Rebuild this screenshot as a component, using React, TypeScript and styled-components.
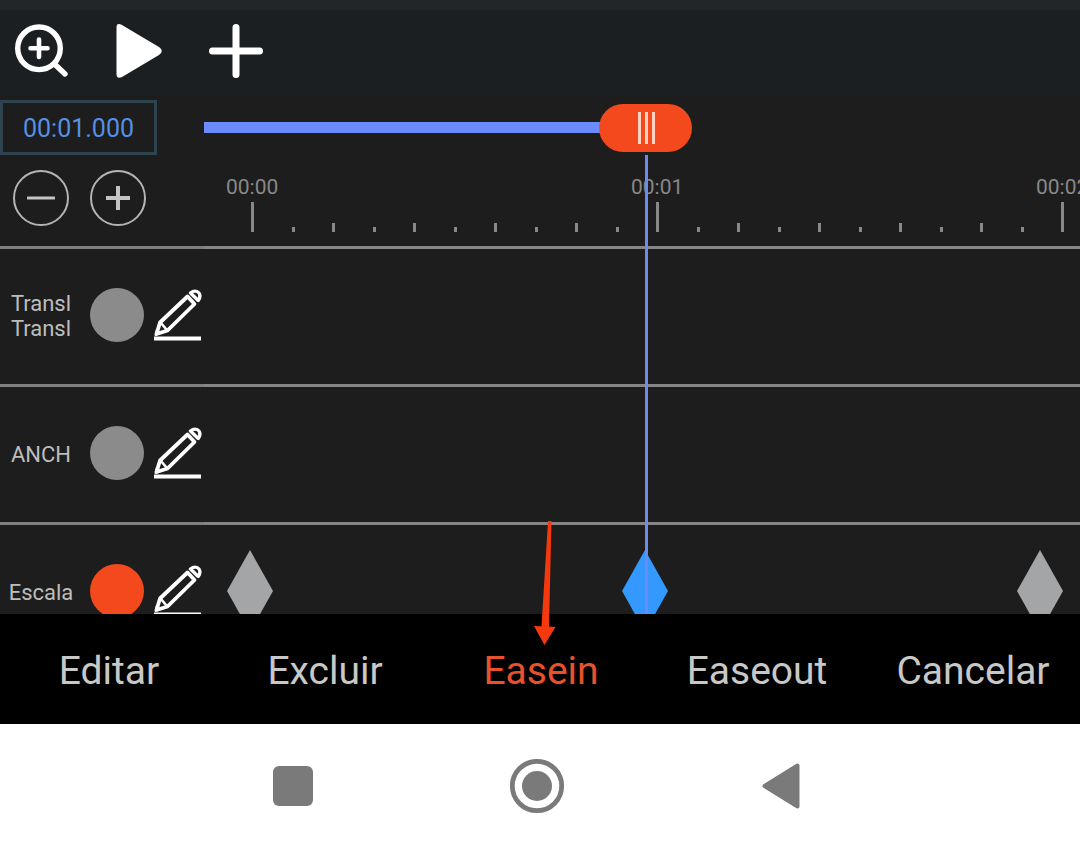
import React, { useState } from "react";
import styled, { createGlobalStyle } from "styled-components";

const SECOND_WIDTH = 395;
const DURATION = 2;
const THUMB_WIDTH = 93;
const PANEL_WIDTH = 204;

const color = {
  strip: "#242529",
  toolbar: "#1b1f21",
  editor: "#1d1d1d",
  accent: "#f4491d",
  blue: "#6b8bff",
  rule: "#868686",
  text: "#bdbdbd",
  muted: "#888888",
};

const GlobalStyle = createGlobalStyle`
  * { box-sizing: border-box; }
  body {
    margin: 0;
    background: ${color.editor};
    font-family: Roboto, "Liberation Sans", sans-serif;
  }
  button {
    margin: 0;
    padding: 0;
    border: 0;
    background: none;
    color: inherit;
    font: inherit;
    cursor: pointer;
  }
  svg { display: block; }
`;

const Screen = styled.div`
  display: flex;
  flex-direction: column;
  height: 100vh;
  overflow: hidden;
`;

const Strip = styled.div`
  flex: none;
  height: 10px;
  background: ${color.strip};
`;

const Toolbar = styled.header`
  flex: none;
  display: flex;
  align-items: center;
  gap: 43px;
  height: 86px;
  padding: 0 15px 4px;
  background: ${color.toolbar};
  color: #ffffff;
`;

const Editor = styled.main`
  position: relative;
  flex: 1;
  min-height: 0;
  overflow: hidden;
  background: ${color.editor};
`;

const Row = styled.div<{ $height: number }>`
  display: grid;
  grid-template-columns: ${PANEL_WIDTH}px minmax(0, 1fr);
  height: ${(p) => p.$height}px;
`;

const PanelCell = styled.div`
  border-bottom: 3px solid #7f7f7f;
`;

const LaneCell = styled.div`
  position: relative;
  overflow: hidden;
  border-bottom: 3px solid ${color.rule};
`;

const ControlsCell = styled(PanelCell)`
  display: flex;
  flex-direction: column;
  align-items: flex-start;
  gap: 15px;
  padding-top: 4px;
`;

const TimeReadout = styled.output`
  display: flex;
  align-items: center;
  justify-content: center;
  width: 157px;
  height: 55px;
  padding-top: 3px;
  border: 3px solid #2d434d;
  color: #5590e6;
  font-size: 25px;
  line-height: 30px;
`;

const ZoomControls = styled.div`
  display: flex;
  gap: 21px;
  padding-left: 13px;
`;

const RoundButton = styled.button`
  display: flex;
  align-items: center;
  justify-content: center;
  width: 56px;
  height: 56px;
  border: 2px solid #b4b4b4;
  border-radius: 50%;
  color: #c4c4c4;
`;

const RulerCell = styled(LaneCell)`
  padding-top: 8px;
`;

const Scrubber = styled.input`
  appearance: none;
  display: block;
  width: ${SECOND_WIDTH * DURATION + THUMB_WIDTH}px;
  height: 48px;
  margin: 0;
  background: linear-gradient(${color.blue}, ${color.blue}) no-repeat 0 18px / var(--played) 11px;
  cursor: pointer;

  &::-webkit-slider-runnable-track {
    height: 48px;
    background: transparent;
  }
  &::-webkit-slider-thumb {
    appearance: none;
    width: ${THUMB_WIDTH}px;
    height: 48px;
    border-radius: 24px;
    background:
      linear-gradient(#ffd2c4, #ffd2c4) no-repeat 39px 8px / 3px 32px,
      linear-gradient(#ffd2c4, #ffd2c4) no-repeat 46px 8px / 3px 32px,
      linear-gradient(#ffd2c4, #ffd2c4) no-repeat 53px 8px / 3px 32px,
      ${color.accent};
  }
`;

const RulerLabels = styled.div`
  display: flex;
  padding: 24px 0 4px 22px;
`;

const RulerLabel = styled.span`
  flex: 0 0 405px;
  color: ${color.muted};
  font-size: 21px;
  line-height: 22px;
`;

const Ticks = styled.div`
  display: flex;
  padding-left: 47px;
`;

const SecondTicks = styled.div`
  flex: 0 0 405px;
  display: grid;
  grid-template-columns: repeat(10, 1fr);
  align-items: end;
  height: 30px;
`;

const Tick = styled.i<{ $height: number }>`
  width: 3px;
  height: ${(p) => p.$height}px;
  background: ${color.muted};
`;

const TrackCell = styled(PanelCell)`
  display: flex;
  align-items: center;
  padding-bottom: 3px;
`;

const TrackName = styled.span`
  width: 82px;
  margin-right: 8px;
  padding-top: 2px;
  color: ${color.text};
  font-size: 22px;
  line-height: 25px;
  text-align: center;
`;

const NameLine = styled.span`
  display: block;
`;

const KeyDot = styled.button<{ $on?: boolean }>`
  width: 54px;
  height: 54px;
  margin-right: 10px;
  border-radius: 50%;
  background: ${(p) => (p.$on ? color.accent : "#8b8b8b")};
`;

const Keyframe = styled.button<{ $active: boolean }>`
  position: absolute;
  top: 25px;
  color: ${(p) => (p.$active ? "#3399ff" : "#a3a5a6")};
`;

const Playhead = styled.div`
  position: absolute;
  top: 59px;
  bottom: 0;
  width: 3px;
  background: #6b8bf2;
  pointer-events: none;
`;

const ActionBar = styled.div`
  flex: none;
  display: grid;
  grid-template-columns: repeat(5, 1fr);
  height: 110px;
  background: #000000;
`;

const Action = styled.button<{ $active: boolean }>`
  position: relative;
  padding: 4px 0 0 2px;
  color: ${(p) => (p.$active ? "#e8512b" : "#c8c8c8")};
  font-size: 39px;
  line-height: 46px;
`;

const Pointer = styled.svg`
  position: absolute;
  top: -93px;
  left: calc(50% - 6px);
  pointer-events: none;
`;

const SystemNav = styled.nav`
  flex: none;
  display: flex;
  align-items: center;
  justify-content: center;
  gap: 188px;
  height: 130px;
  padding: 0 7px 6px 0;
  background: #ffffff;
  color: #7a7a7a;
`;

const MagnifierIcon = () => (
  <svg width="54" height="54" viewBox="0 0 54 54" fill="none" stroke="currentColor" strokeLinecap="round">
    <circle cx="24" cy="24.3" r="21.3" strokeWidth="5.4" />
    <path d="M40 40.500L50 50" strokeWidth="5.400" />
    <path d="M15.500 24.300H32.500M24 15.500V33" strokeWidth="4.600" />
  </svg>
);

const PlayIcon = () => (
  <svg width="54" height="54" viewBox="0 0 54 54" fill="currentColor">
    <path d="M4.500 3.500Q4.500 -1.500 9.500 .8L47 23Q52.500 27 47 31L10 53Q4.500 55.500 4.500 50Z" />
  </svg>
);

const PlusIcon = () => (
  <svg width="54" height="54" viewBox="0 0 54 54" fill="none" stroke="currentColor" strokeWidth="7" strokeLinecap="round">
    <path d="M3.500 27H50.500M27 3.500V50.500" />
  </svg>
);

const PencilIcon = () => (
  <svg width="48" height="53" viewBox="0 0 48 53" fill="none" stroke="#fff" strokeWidth="3.8" strokeLinejoin="round">
    <path d="M6 33.500L33.500 7.500L40.500 15L13.500 41.500L2.500 45Z" />
    <path d="M6.500 33.500L12.500 40.500" strokeWidth="2.600" />
    <path d="M1 46.500L2.500 40L7 44.500Z" fill="#fff" strokeWidth="1" />
    <path d="M36.500 4C39.500 1.500 43 1.500 45 4C46.500 6.500 46.200 8.800 44.200 11.500Z" strokeWidth="3.400" />
    <path d="M0 49.500H47" strokeWidth="4" />
  </svg>
);

interface Track {
  name: string[];
  keyed: boolean;
  keyframes: number[];
}

const tracks: Track[] = [
  { name: ["Transl", "Transl"], keyed: false, keyframes: [] },
  { name: ["ANCH"], keyed: false, keyframes: [] },
  { name: ["Escala"], keyed: true, keyframes: [0, 1, 2] },
];

const actions = ["Editar", "Excluir", "Easein", "Easeout", "Cancelar"];
const seconds = [0, 1, 2];

const tickHeight = (index: number) => (index === 0 ? 30 : index % 2 === 0 ? 9 : 5);

const formatTime = (t: number) => {
  const minutes = String(Math.floor(t / 60)).padStart(2, "0");
  return `${minutes}:${(t % 60).toFixed(3).padStart(6, "0")}`;
};

export default function App() {
  const [time, setTime] = useState(1);
  const [action, setAction] = useState("Easein");
  const scrubberStyle = { "--played": `${46 + time * SECOND_WIDTH}px` } as React.CSSProperties;

  return (
    <Screen>
      <GlobalStyle />
      <Strip />
      <Toolbar>
        <button type="button" aria-label="Zoom"><MagnifierIcon /></button>
        <button type="button" aria-label="Play"><PlayIcon /></button>
        <button type="button" aria-label="Add"><PlusIcon /></button>
      </Toolbar>

      <Editor>
        <Row $height={153}>
          <ControlsCell>
            <TimeReadout>{formatTime(time)}</TimeReadout>
            <ZoomControls>
              <RoundButton type="button" aria-label="Zoom out">
                <svg width="28" height="28" viewBox="0 0 28 28" stroke="currentColor" strokeWidth="3">
                  <path d="M1 14H27" strokeLinecap="round" />
                </svg>
              </RoundButton>
              <RoundButton type="button" aria-label="Zoom in">
                <svg width="28" height="28" viewBox="0 0 28 28" stroke="currentColor" strokeWidth="4">
                  <path d="M2 14H26M14 2V26" />
                </svg>
              </RoundButton>
            </ZoomControls>
          </ControlsCell>
          <RulerCell>
            <Scrubber
              type="range"
              aria-label="Time"
              min={0}
              max={DURATION}
              step={0.001}
              value={time}
              style={scrubberStyle}
              onChange={(e) => setTime(Number(e.target.value))}
            />
            <RulerLabels>
              {seconds.map((s) => (
                <RulerLabel key={s}>{`00:0${s}`}</RulerLabel>
              ))}
            </RulerLabels>
            <Ticks>
              {seconds.map((s) => (
                <SecondTicks key={s}>
                  {Array.from({ length: 10 }, (_, i) => (
                    <Tick key={i} $height={tickHeight(i)} />
                  ))}
                </SecondTicks>
              ))}
            </Ticks>
          </RulerCell>
        </Row>

        {tracks.map((track) => (
          <Row key={track.name[0]} $height={138}>
            <TrackCell>
              <TrackName>
                {track.name.map((line, i) => (
                  <NameLine key={i}>{line}</NameLine>
                ))}
              </TrackName>
              <KeyDot type="button" $on={track.keyed} aria-label={`Keyframe ${track.name[0]}`} />
              <button type="button" aria-label={`Edit ${track.name[0]}`}><PencilIcon /></button>
            </TrackCell>
            <LaneCell>
              {track.keyframes.map((at) => (
                <Keyframe
                  key={at}
                  type="button"
                  aria-label={`Keyframe at ${at}s`}
                  $active={at === time}
                  style={{ left: 23 + at * SECOND_WIDTH }}
                  onClick={() => setTime(at)}
                >
                  <svg width="46" height="82" viewBox="0 0 46 82" fill="currentColor">
                    <path d="M23 0L46 41L23 82L0 41Z" />
                  </svg>
                </Keyframe>
              ))}
            </LaneCell>
          </Row>
        ))}

        <Playhead style={{ left: 250 + time * SECOND_WIDTH }} />
      </Editor>

      <ActionBar>
        {actions.map((name) => (
          <Action key={name} type="button" $active={name === action} onClick={() => setAction(name)}>
            {name}
            {name === "Easein" && (
              <Pointer width="22" height="124" viewBox="0 0 22 124" fill="#f5390f" aria-hidden="true">
                <path d="M14 0H17.500L15 105.500L21.500 106L10.500 124L0 105L7.500 105.300Z" />
              </Pointer>
            )}
          </Action>
        ))}
      </ActionBar>

      <SystemNav>
        <button type="button" aria-label="Recents">
          <svg width="56" height="56" viewBox="0 0 56 56" fill="currentColor">
            <rect x="8" y="8" width="40" height="40" rx="6" />
          </svg>
        </button>
        <button type="button" aria-label="Home">
          <svg width="56" height="56" viewBox="0 0 56 56" fill="currentColor">
            <circle cx="28" cy="28" r="24.700" fill="none" stroke="currentColor" strokeWidth="4.800" />
            <circle cx="28" cy="28" r="15" />
          </svg>
        </button>
        <button type="button" aria-label="Back">
          <svg width="56" height="56" viewBox="0 0 56 56" fill="currentColor" stroke="currentColor" strokeWidth="4" strokeLinejoin="round">
            <path d="M11.500 28L44.500 7.500V48.500Z" />
          </svg>
        </button>
      </SystemNav>
    </Screen>
  );
}
